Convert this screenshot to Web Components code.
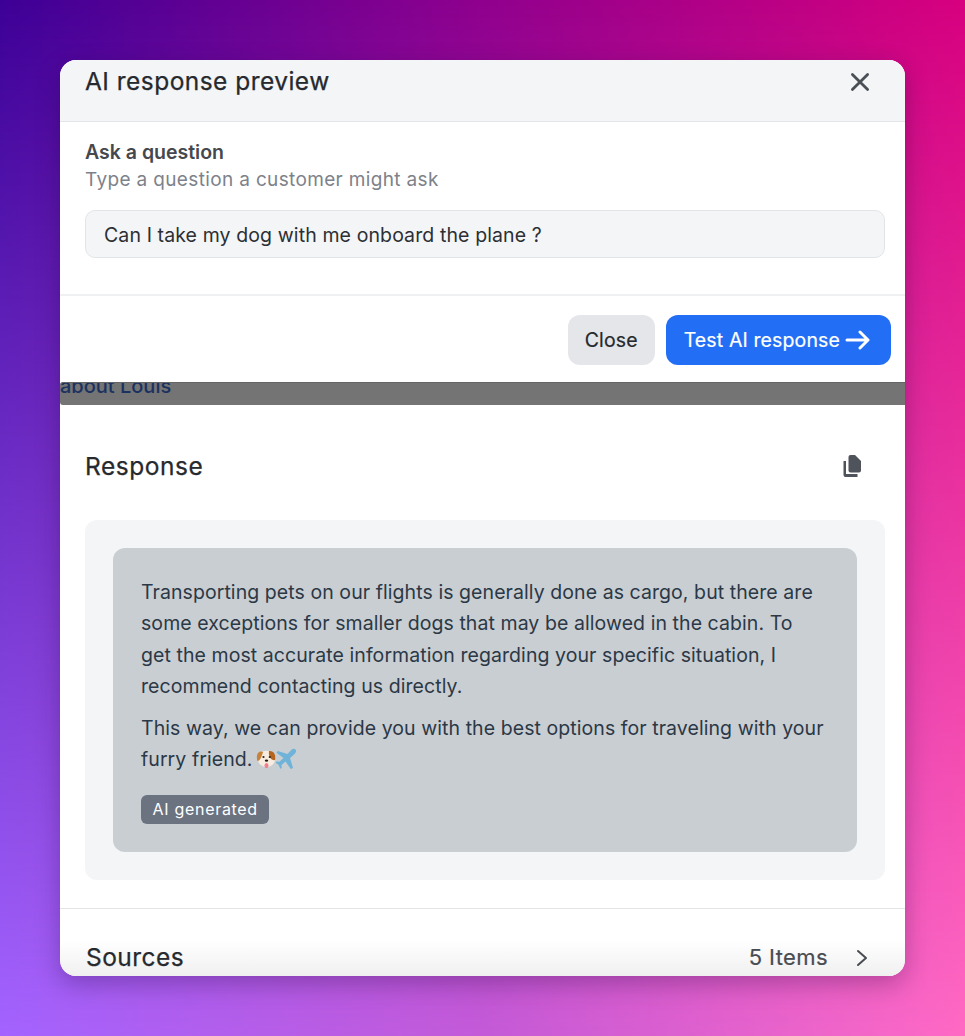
<!DOCTYPE html>
<html lang="en">
<head>
<meta charset="utf-8">
<title>AI response preview</title>
<style>
  html, body { margin: 0; height: 100%; }
  body { font-family: Inter, "Liberation Sans", sans-serif; }
</style>
</head>
<body>
<gradient-stage>
  <preview-panel>
    <panel-header slot="top" title-text="AI response preview"></panel-header>
    <question-form slot="top"
      label="Ask a question"
      hint="Type a question a customer might ask"
      value="Can I take my dog with me onboard the plane ?"></question-form>
    <action-bar slot="top">
      <ui-button>Close</ui-button>
      <ui-button variant="primary">Test AI response</ui-button>
    </action-bar>
    <backdrop-strip slot="top">about Louis</backdrop-strip>
    <response-sheet slot="top">
      <response-bubble>
        <p>Transporting pets on our flights is generally done as cargo, but there are some exceptions for smaller dogs that may be allowed in the cabin. To get the most accurate information regarding your specific situation, I recommend contacting us directly.</p>
        <p>This way, we can provide you with the best options for traveling with your furry friend. <emoji-pair></emoji-pair></p>
      </response-bubble>
    </response-sheet>
    <sources-row slot="top" count="5 Items"></sources-row>
  </preview-panel>
</gradient-stage>

<script>
// small helper, every element just renders its template into an open shadow root
class BaseElement extends HTMLElement {
  constructor() {
    super();
    this.attachShadow({ mode: 'open' });
  }

  connectedCallback() {
    this.shadowRoot.innerHTML = this.render();
  }
}

class GradientStage extends BaseElement {
  render() {
    return `
      <style>
        :host {
          display: block;
          position: relative;
          width: 100%;
          height: 1036px;
          box-sizing: border-box;
          padding: 60px;
          overflow: hidden;
          background: linear-gradient(to right, #3d0097 0%, #88008f 45%, #d8007f 100%);
        }
        .lower {
          position: absolute;
          inset: 0;
          background: linear-gradient(to right, #a463ff 0%, #c45ad8 50%, #ff69c4 100%);
          -webkit-mask-image: linear-gradient(to bottom, transparent 0%, #000 100%);
          mask-image: linear-gradient(to bottom, transparent 0%, #000 100%);
        }
        .content { position: relative; height: 100%; }
      </style>
      <div class="lower"></div>
      <div class="content"><slot></slot></div>
    `;
  }
}

class PreviewPanel extends BaseElement {
  render() {
    return `
      <style>
        :host {
          display: flex;
          flex-direction: column;
          height: 100%;
          position: relative;
          border-radius: 16px;
          overflow: hidden;
          background: #fff;
          box-shadow: 0 8px 24px rgba(20, 0, 50, .28);
        }
        .fade {
          position: absolute;
          left: 0;
          right: 0;
          bottom: 0;
          height: 36px;
          pointer-events: none;
          background: linear-gradient(to bottom, rgba(240,240,240,0), rgba(240,240,240,1));
        }
      </style>
      <slot name="top"></slot>
      <div class="fade"></div>
    `;
  }
}

class PanelHeader extends BaseElement {
  render() {
    return `
      <style>
        :host {
          display: flex;
          flex: none;
          justify-content: space-between;
          height: 61px;
          padding: 0 35px 0 25px;
          background: #f3f5f7;
          border-bottom: 1px solid #e3e5e8;
          color: #26292d;
        }
        h2 {
          margin: 6px 0 0;
          font: 400 24.5px/30px Inter, sans-serif;
          letter-spacing: .46px;
          -webkit-text-stroke: .25px #26292d;
        }
        svg { margin-top: 12px; }
      </style>
      <h2>${this.getAttribute('title-text')}</h2>
      <svg width="20" height="20" viewBox="0 0 20 20" fill="none" stroke="#4b5056" stroke-width="2.8" stroke-linecap="round">
        <path d="M2.4 2.4 L17.6 17.6 M17.6 2.4 L2.4 17.6"/>
      </svg>
    `;
  }
}

class QuestionForm extends BaseElement {
  render() {
    return `
      <style>
        :host {
          display: block;
          flex: none;
          height: 174px;
          box-sizing: border-box;
          padding: 17px 20px 0 25px;
          border-bottom: 2px solid #eff0f2;
        }
        .label { font: 600 19.5px/26px Inter, sans-serif; color: #45484d; }
        .hint { font: 400 19px/29px Inter, sans-serif; letter-spacing: .35px; color: #7d828a; }
        .field {
          margin-top: 16px;
          height: 48px;
          box-sizing: border-box;
          padding: 2px 18px 0;
          display: flex;
          align-items: center;
          border: 1.5px solid #e2e5e7;
          border-radius: 10px;
          background: #f3f5f7;
          font: 400 19.5px/24px Inter, sans-serif;
          letter-spacing: .11px;
          color: #2c2f33;
        }
      </style>
      <div class="label">${this.getAttribute('label')}</div>
      <div class="hint">${this.getAttribute('hint')}</div>
      <div class="field">${this.getAttribute('value')}</div>
    `;
  }
}

class ActionBar extends BaseElement {
  render() {
    return `
      <style>
        :host {
          display: flex;
          flex: none;
          justify-content: flex-end;
          gap: 11px;
          height: 86px;
          box-sizing: border-box;
          padding: 19px 14px 0 0;
        }
      </style>
      <slot></slot>
    `;
  }
}

class UiButton extends BaseElement {
  render() {
    const primary = this.getAttribute('variant') === 'primary';
    const arrow = primary ? `
      <svg width="26" height="20" viewBox="0 0 26 20" fill="none" stroke="#fff" stroke-width="3" stroke-linecap="round" stroke-linejoin="round">
        <path d="M2 10 H23 M15 2 L23 10 L15 18"/>
      </svg>` : '';
    return `
      <style>
        :host {
          display: inline-flex;
          align-items: center;
          gap: 5px;
          height: 50px;
          box-sizing: border-box;
          padding: ${primary ? '0 20px 0 18px' : '0 17px'};
          border-radius: 12px;
          background: ${primary ? '#226ff5' : '#e4e6e9'};
          color: ${primary ? '#fff' : '#26292d'};
          font: 400 19.5px/24px Inter, sans-serif;
          letter-spacing: .13px;
          -webkit-text-stroke: .2px currentColor;
        }
      </style>
      <slot></slot>${arrow}
    `;
  }
}

class BackdropStrip extends BaseElement {
  render() {
    return `
      <style>
        :host {
          display: block;
          flex: none;
          height: 23px;
          overflow: hidden;
          background: #747474;
          border-top: 1px solid #666;
          border-radius: 3px 0 0 3px;
          box-sizing: border-box;
          color: #1b3260;
          font: 500 20px/24px Inter, sans-serif;
        }
        .line { margin-top: -9px; white-space: nowrap; }
      </style>
      <div class="line"><slot></slot></div>
    `;
  }
}

class ResponseSheet extends BaseElement {
  render() {
    return `
      <style>
        :host {
          display: block;
          flex: none;
          height: 504px;
          box-sizing: border-box;
          padding: 0 20px 0 25px;
          border-bottom: 1px solid #e3e4e6;
        }
        .head {
          display: flex;
          justify-content: space-between;
          align-items: center;
          height: 115px;
          box-sizing: border-box;
          padding: 6px 23px 0 0;
          color: #26292d;
        }
        h3 {
          margin: 0;
          font: 400 24.5px/30px Inter, sans-serif;
          letter-spacing: .55px;
          -webkit-text-stroke: .25px #26292d;
        }
        .card {
          height: 360px;
          box-sizing: border-box;
          padding: 28px;
          border-radius: 12px;
          background: #f3f5f7;
        }
      </style>
      <div class="head">
        <h3>Response</h3>
        <svg width="20" height="24" viewBox="0 0 20 24" fill="#4f535c">
          <path d="M8.5 1 H13 L19 7 V16.5 A2 2 0 0 1 17 18.5 H8.5 A2 2 0 0 1 6.5 16.5 V3 A2 2 0 0 1 8.5 1 Z"/>
          <path d="M1.5 7 H4 V20 H15.5 V23 H3.5 A2 2 0 0 1 1.5 21 Z"/>
        </svg>
      </div>
      <div class="card"><slot></slot></div>
    `;
  }
}

class ResponseBubble extends BaseElement {
  render() {
    return `
      <style>
        :host {
          display: block;
          height: 304px;
          box-sizing: border-box;
          padding: 28.5px 30px 0 28px;
          border-radius: 12px;
          background: #c9ced2;
          color: #2b3846;
          font: 400 19.5px/31.5px Inter, sans-serif;
          letter-spacing: .07px;
        }
        ::slotted(p) { margin: 0 0 10px; }
        .badge { margin-top: 9px; }
      </style>
      <slot></slot>
      <ai-badge class="badge">AI generated</ai-badge>
    `;
  }
}

class AiBadge extends BaseElement {
  render() {
    return `
      <style>
        :host {
          display: inline-block;
          height: 29px;
          box-sizing: border-box;
          padding: 0 11.5px;
          border-radius: 6px;
          background: #6b7280;
          color: #fff;
          font: 400 16px/28px Inter, sans-serif;
          letter-spacing: .7px;
        }
      </style>
      <slot></slot>
    `;
  }
}

// dog face and airplane, no emoji font on the box so both are drawn
class EmojiPair extends BaseElement {
  render() {
    return `
      <style>
        :host { display: inline-block; vertical-align: -4px; line-height: 0; margin-left: -2px; }
      </style>
      <svg width="42" height="22" viewBox="0 0 42 22">
        <ellipse cx="10.5" cy="11" rx="8.5" ry="8.2" fill="#f6ecdf"/>
        <path d="M13 3 C18 2.5 20 7 19 12 C16 13 12 9 13 3 Z" fill="#b5651d"/>
        <path d="M5 3.5 C1 3.5 0 9 1.5 13 C4 13 6 8 7 4 Z" fill="#c8813a"/>
        <circle cx="7.5" cy="9" r="1.1" fill="#2c1c10"/>
        <circle cx="13.8" cy="9" r="1.1" fill="#2c1c10"/>
        <ellipse cx="10.5" cy="12.6" rx="1.7" ry="1.2" fill="#2c1c10"/>
        <ellipse cx="10.5" cy="17.6" rx="2" ry="2.6" fill="#ef7f8f"/>
        <path d="M39.5 1.5 C41 3 39.5 5 38 6.5 L34 10 L37 20 L34.8 21 L29.5 13.5 L25.5 17 L25.8 20 L24.3 20.8 L22.5 16.8 L19.5 14.7 L20.6 13.4 L23.5 13.8 L27.5 10 L20.5 4.8 L21.7 3 L31.5 6 L35 2.3 C36.5 .8 38.2 .4 39.5 1.5 Z" fill="#6fb3d9"/>
      </svg>
    `;
  }
}

class SourcesRow extends BaseElement {
  render() {
    return `
      <style>
        :host {
          display: flex;
          flex: 1;
          position: relative;
          z-index: 1;
          justify-content: space-between;
          padding: 32px 37px 0 26px;
          color: #26292d;
        }
        .title {
          font: 400 24.5px/33px Inter, sans-serif;
          letter-spacing: .45px;
          -webkit-text-stroke: .25px #26292d;
        }
        .meta {
          display: flex;
          align-items: center;
          gap: 28px;
          height: 33px;
          color: #484c52;
          font: 400 22px/33px Inter, sans-serif;
          letter-spacing: .4px;
          -webkit-text-stroke: .2px #484c52;
        }
      </style>
      <div class="title">Sources</div>
      <div class="meta">
        <span>${this.getAttribute('count')}</span>
        <svg width="12" height="18" viewBox="0 0 12 18" fill="none" stroke="#484c52" stroke-width="2" stroke-linecap="round" stroke-linejoin="round">
          <path d="M2 2 L10 9 L2 16"/>
        </svg>
      </div>
    `;
  }
}

customElements.define('gradient-stage', GradientStage);
customElements.define('preview-panel', PreviewPanel);
customElements.define('panel-header', PanelHeader);
customElements.define('question-form', QuestionForm);
customElements.define('action-bar', ActionBar);
customElements.define('ui-button', UiButton);
customElements.define('backdrop-strip', BackdropStrip);
customElements.define('response-sheet', ResponseSheet);
customElements.define('response-bubble', ResponseBubble);
customElements.define('ai-badge', AiBadge);
customElements.define('emoji-pair', EmojiPair);
customElements.define('sources-row', SourcesRow);
</script>
</body>
</html>
